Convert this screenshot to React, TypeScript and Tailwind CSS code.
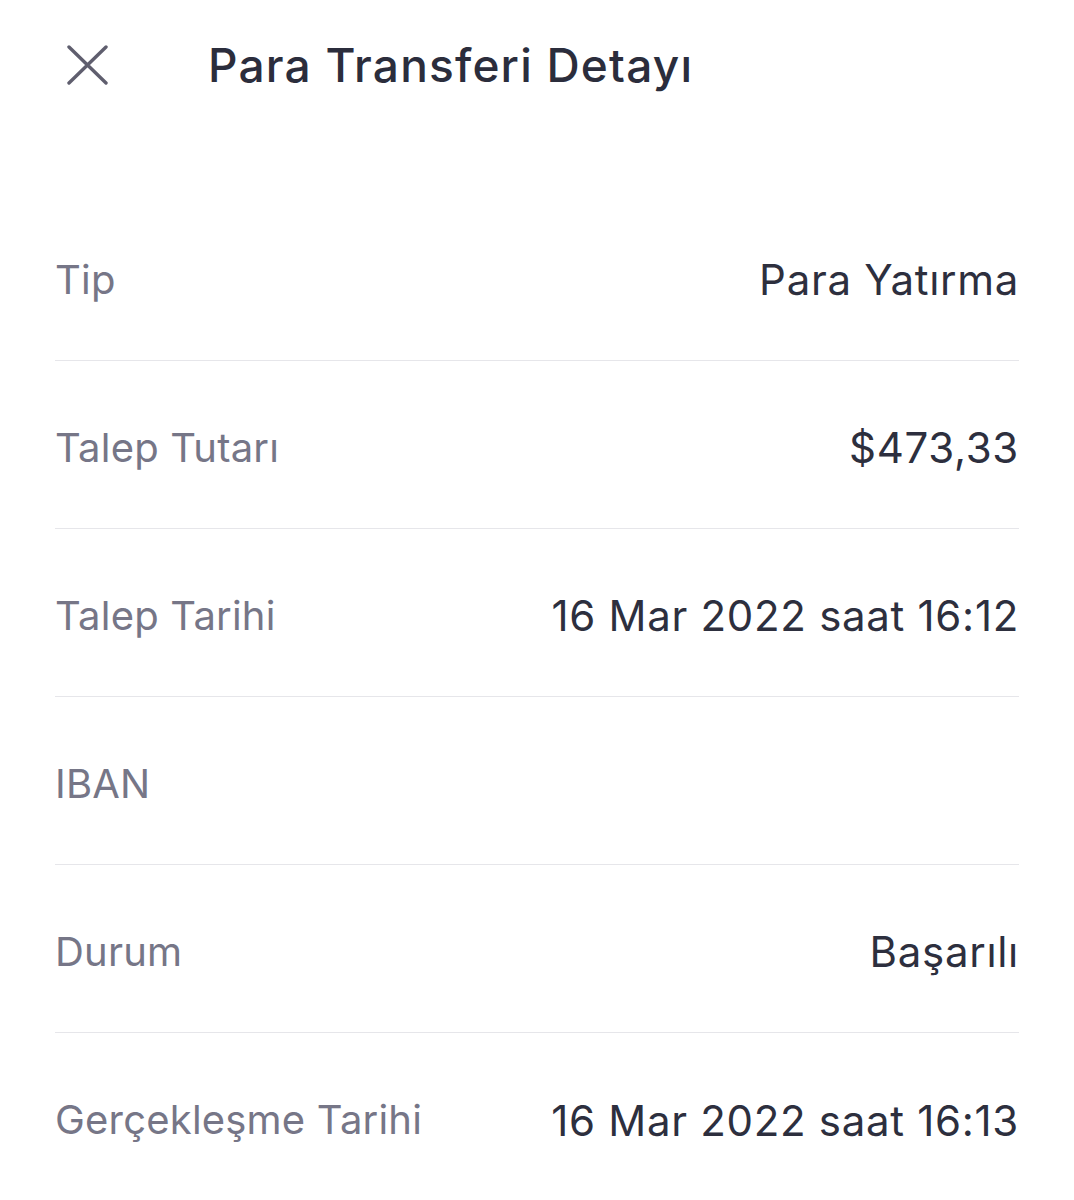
import React from "react";

const rows: [string, string][] = [
  ["Tip", "Para Yatırma"],
  ["Talep Tutarı", "$473,33"],
  ["Talep Tarihi", "16 Mar 2022 saat 16:12"],
  ["IBAN", ""],
  ["Durum", "Başarılı"],
  ["Gerçekleşme Tarihi", "16 Mar 2022 saat 16:13"],
];

export default function App() {
  return (
    <div className="w-[1074px] h-[1200px] bg-white overflow-hidden" style={{ fontFamily: "Inter, 'Noto Sans', sans-serif" }}>
      <div className="h-[130px] flex items-center">
        <div className="w-[208px] flex items-center pl-[67px]">
          <svg width="41" height="40" viewBox="0 0 41 40" fill="none" stroke="#5f5e6e" strokeWidth="3.4" strokeLinecap="round">
            <path d="M2 2 L39 38 M39 2 L2 38" />
          </svg>
        </div>
        <div className="text-[46px] tracking-[1.2px] text-[#2b2d3c] font-medium">Para Transferi Detayı</div>
      </div>
      <div className="h-[63px]" />
      <div className="px-[55px]">
        {rows.map(([l, v], i) => (
          <div key={i} className={"h-[168px] flex items-center justify-between pt-[6px] " + (i < rows.length - 1 ? "border-b border-[#e6e6ea]" : "")}>
            <span className="text-[40px] tracking-[0.2px] text-[#767687]">{l}</span>
            <span className="text-[42px] tracking-[0.7px] text-[#2d2f3e]">{v}</span>
          </div>
        ))}
      </div>
    </div>
  );
}
